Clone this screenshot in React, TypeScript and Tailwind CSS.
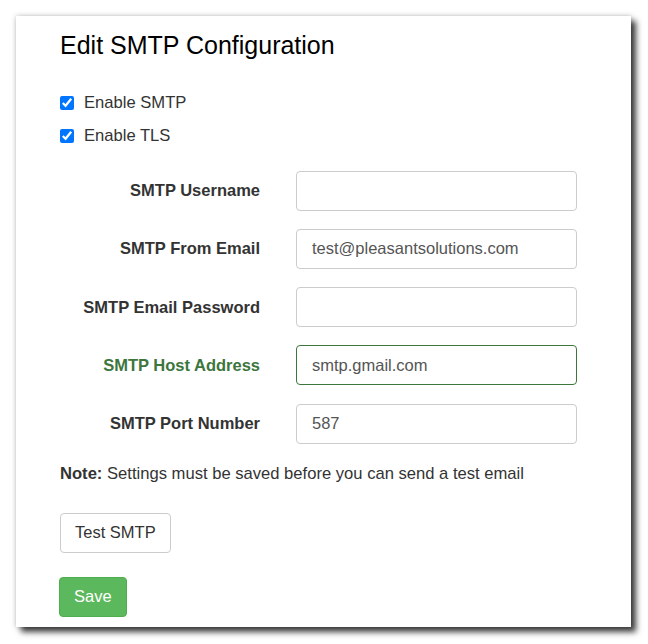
import React from 'react';

interface FieldProps {
  label: string;
  value?: string;
  success?: boolean;
  type?: string;
}

const Field: React.FC<FieldProps> = ({ label, value = '', success, type = 'text' }) => (
  <div className="flex items-center">
    <label
      className={`w-[200px] text-right text-[16.5px] font-bold ${success ? 'text-[#3c763d]' : 'text-[#333]'}`}
    >
      {label}
    </label>
    <input
      type={type}
      defaultValue={value}
      className={`ml-[36px] h-[40px] w-[281px] rounded-[4px] border bg-white px-[15px] text-[16.5px] text-[#555] outline-none ${
        success ? 'border-[#3c763d]' : 'border-[#ccc]'
      }`}
    />
  </div>
);

export default function App() {
  return (
    <div className="min-h-[644px] bg-white p-[16px] font-['Liberation_Sans',Arial,sans-serif]">
      <div className="h-[611px] w-[615px] bg-white pl-[44px] pt-[16px] shadow-[5px_5px_6px_rgba(0,0,0,0.75),0_0_5px_rgba(0,0,0,0.25)]">
        <h2 className="text-[25px] leading-[1.1] text-black">Edit SMTP Configuration</h2>

        <div className="mt-[31px] flex flex-col gap-[9px] text-[16.6px] leading-[24px] text-[#333]">
          <label className="flex items-center gap-[10px]">
            <input type="checkbox" defaultChecked className="m-0 h-[14px] w-[14px] accent-[#0075ff]" />
            Enable SMTP
          </label>
          <label className="flex items-center gap-[10px]">
            <input type="checkbox" defaultChecked className="m-0 h-[14px] w-[14px] accent-[#0075ff]" />
            Enable TLS
          </label>
        </div>

        <div className="mt-[23px] flex flex-col gap-[18.25px]">
          <Field label="SMTP Username" />
          <Field label="SMTP From Email" value="test@pleasantsolutions.com" />
          <Field label="SMTP Email Password" type="password" />
          <Field label="SMTP Host Address" value="smtp.gmail.com" success />
          <Field label="SMTP Port Number" value="587" />
        </div>

        <p className="mt-[18px] text-[16.6px] leading-[24px] text-[#333]">
          <strong>Note:</strong> Settings must be saved before you can send a test email
        </p>

        <button className="mt-[27px] block h-[40px] rounded-[4px] border border-[#ccc] bg-white px-[14px] text-[16.5px] text-[#333]">
          Test SMTP
        </button>

        <button className="-ml-px mt-[24px] block h-[40px] rounded-[4px] border border-[#4cae4c] bg-[#5cb85c] px-[14px] text-[16.5px] text-white">
          Save
        </button>
      </div>
    </div>
  );
}
